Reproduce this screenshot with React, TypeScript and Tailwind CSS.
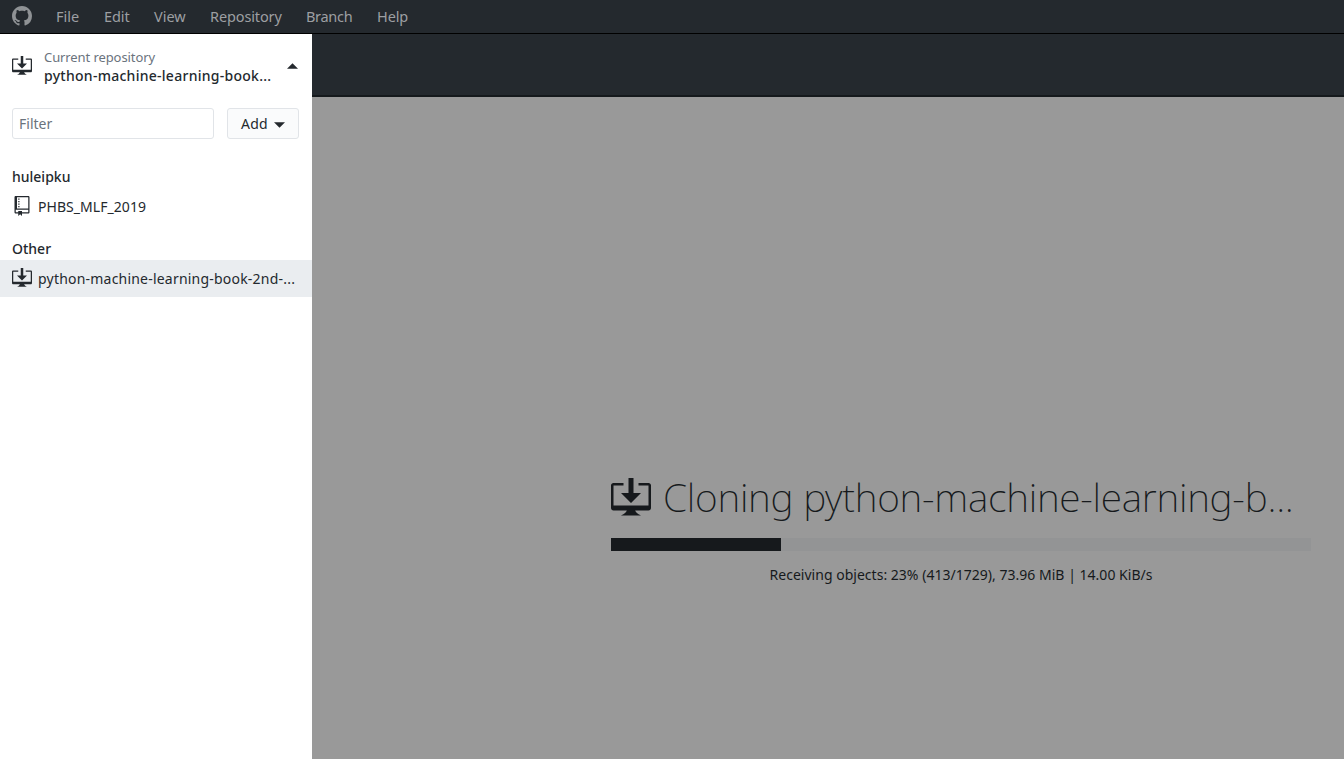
import type { ReactNode } from 'react';

const MENU = [
  { label: 'File', cls: 'w-12' },
  { label: 'Edit', cls: 'w-[50px] tracking-[-0.1px]' },
  { label: 'View', cls: 'w-14' },
  { label: 'Repository', cls: 'w-24 tracking-[-0.12px]' },
  { label: 'Branch', cls: 'w-[71px] tracking-[-0.3px]' },
  { label: 'Help', cls: 'tracking-[-0.1px]' },
];

function Octicon({ d, className, viewBox = '0 0 16 16' }: { d: string; className: string; viewBox?: string }) {
  return (
    <svg viewBox={viewBox} className={className} fill="currentColor" aria-hidden="true">
      <path fillRule="evenodd" d={d} />
    </svg>
  );
}

const MARK =
  'M8 0C3.58 0 0 3.58 0 8c0 3.54 2.29 6.53 5.47 7.59.4.07.55-.17.55-.38 0-.19-.01-.82-.01-1.49-2.01.37-2.53-.49-2.69-.94-.09-.23-.48-.94-.82-1.13-.28-.15-.68-.52-.01-.53.63-.01 1.08.58 1.23.82.72 1.21 1.87.87 2.33.66.07-.52.28-.87.51-1.07-1.78-.2-3.64-.89-3.64-3.95 0-.87.31-1.59.82-2.15-.08-.2-.36-1.02.08-2.12 0 0 .67-.21 2.2.82.64-.18 1.32-.27 2-.27.68 0 1.36.09 2 .27 1.53-1.04 2.2-.82 2.2-.82.44 1.1.16 1.92.08 2.12.51.56.82 1.27.82 2.15 0 3.07-1.87 3.75-3.65 3.95.29.25.54.73.54 1.48 0 1.07-.01 1.93-.01 2.2 0 .21.15.46.55.38A8.013 8.013 0 0 0 16 8c0-4.42-3.58-8-8-8z';
const DOWNLOAD =
  'M4 6h3V0h2v6h3l-4 4-4-4zm11-4h-4v1h4v8H1V3h4V2H1c-.55 0-1 .45-1 1v9c0 .55.45 1 1 1h5.34c-.25.61-.86 1.39-2.34 2h8c-1.48-.61-2.09-1.39-2.34-2H15c.55 0 1-.45 1-1V3c0-.55-.45-1-1-1z';
const REPO =
  'M4 9H3V8h1v1zm0-3H3v1h1V6zm0-2H3v1h1V4zm0-2H3v1h1V2zm8-1v12c0 .55-.45 1-1 1H6v2l-1.5-1.5L3 16v-2H1c-.55 0-1-.45-1-1V1c0-.55.45-1 1-1h10c.55 0 1 .45 1 1zm-1 10H1v2h2v-1h3v1h5v-2zm0-10H2v9h9V1z';

function Triangle({ up }: { up?: boolean }) {
  return (
    <svg viewBox="0 0 12 6" className="h-1.5 w-[11px] shrink-0" fill="currentColor" aria-hidden="true">
      <path d={up ? 'M0 6L6 0l6 6z' : 'M0 0l6 6 6-6z'} />
    </svg>
  );
}

function GroupTitle({ children }: { children: ReactNode }) {
  return <h2 className="h-[23px] px-3 text-[14px] leading-6 font-medium">{children}</h2>;
}

export default function App() {
  return (
    <div className="flex h-screen flex-col overflow-hidden bg-white font-['Noto_Sans',sans-serif] text-[14px] text-[#24292e]">
      <header className="flex h-[34px] shrink-0 items-center border-b border-black bg-[#24292e] pb-0.5 pl-3 text-[#9d9fa2]">
        <Octicon d={MARK} className="mr-6 size-5 shrink-0 text-[#8f9295]" />
        <nav className="flex text-[14.5px] leading-5">
          {MENU.map((m) => (
            <span key={m.label} className={m.cls}>{m.label}</span>
          ))}
        </nav>
      </header>

      <div className="flex min-h-0 flex-1">
        <aside className="w-[312px] shrink-0 bg-white">
          <div className="flex h-[63px] items-center pr-3.5 pl-3">
            <Octicon d={DOWNLOAD} className="mr-3 size-5 shrink-0" />
            <div className="w-[248px] pt-px whitespace-nowrap">
              <div className="text-[13px] leading-[18px] tracking-[-0.09px] text-[#6a737d]">Current repository</div>
              <div className="text-[14px] leading-[19px] font-medium tracking-[0.27px]">python-machine-learning-book...</div>
            </div>
            <div className="-ml-[5px] flex"><Triangle up /></div>
          </div>

          <div className="flex gap-[13px] px-3 pt-[11px]">
            <input
              placeholder="Filter"
              className="h-[31px] w-[202px] rounded-[3px] border border-[#e1e4e8] px-1.5 text-[14px] placeholder:text-[#6a737d]"
            />
            <button className="flex h-[31px] w-[72px] items-center rounded-[3px] border border-[#e1e4e8] bg-[#fafbfc] pl-[13px] whitespace-nowrap">
              <span className="w-[33px] text-left tracking-[0.2px]">Add</span>
              <span className="mt-[3px] flex"><Triangle /></span>
            </button>
          </div>

          <section className="pt-[26px]">
            <GroupTitle>huleipku</GroupTitle>
            <div className="flex h-9 items-center pl-[14px]">
              <Octicon d={REPO} viewBox="0 0 12 16" className="mr-2 h-5 w-4 shrink-0" />
              <span className="tracking-[0.05px]">PHBS_MLF_2019</span>
            </div>
          </section>
          <section className="pt-[13px]">
            <GroupTitle>Other</GroupTitle>
            <div className="flex h-[37px] items-center bg-[#eaedf0] pl-3">
              <Octicon d={DOWNLOAD} className="mr-1.5 mb-0.5 size-5 shrink-0" />
              <span className="tracking-[0.21px] whitespace-nowrap">python-machine-learning-book-2nd-...</span>
            </div>
          </section>
        </aside>

        <div className="flex min-w-0 flex-1 flex-col">
          <div className="h-[63px] shrink-0 border-b-2 border-[#15191c] bg-[#24292e]" />
          <main className="flex-1 bg-[#999999] pt-[376px] pl-[299px] text-[#16191c]">
            <div className="w-[700px]">
              <div className="flex h-[50px] items-center">
                <Octicon d={DOWNLOAD} className="mr-3 size-10 shrink-0" />
                <h1 className="pb-0.5 text-[39px] leading-[50px] font-extralight tracking-[-0.26px] whitespace-nowrap">
                  Cloning python-machine-learning-b...
                </h1>
              </div>
              <div className="mt-[15px] h-[13px] bg-[#939495]">
                <div className="h-full w-[170px] bg-[#16191c]" />
              </div>
              <p className="mt-3.5 text-center text-[14px] leading-5 tracking-[0.02px] whitespace-nowrap">
                Receiving objects: 23% (413/1729), 73.96 MiB | 14.00 KiB/s
              </p>
            </div>
          </main>
        </div>
      </div>
    </div>
  );
}
